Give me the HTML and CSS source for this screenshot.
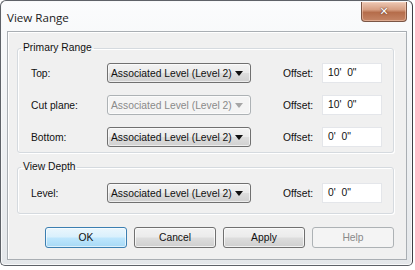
FILE: index.html
```html
<!DOCTYPE html>
<html>
<head>
<meta charset="utf-8">
<link rel="stylesheet" href="styles.css">
</head>
<body>
<div class="window">
  <div class="titlebar">
    <span class="title">View Range</span>
    <div class="close"><span class="close-x">&#x2715;</span></div>
  </div>
  <div class="client">
    <fieldset class="group g1">
      <legend>Primary Range</legend>
      <div class="row">
        <span class="label">Top:</span>
        <div class="combo"><span class="combo-text">Associated Level (Level 2)</span><svg class="arrow" width="8" height="5" viewBox="0 0 8 5"><path d="M0 0H8L4 5Z"/></svg></div>
        <span class="off-label">Offset:</span>
        <div class="field">10'  0"</div>
      </div>
      <div class="row">
        <span class="label">Cut plane:</span>
        <div class="combo disabled"><span class="combo-text">Associated Level (Level 2)</span><svg class="arrow" width="8" height="5" viewBox="0 0 8 5"><path d="M0 0H8L4 5Z"/></svg></div>
        <span class="off-label">Offset:</span>
        <div class="field">10'  0"</div>
      </div>
      <div class="row">
        <span class="label">Bottom:</span>
        <div class="combo"><span class="combo-text">Associated Level (Level 2)</span><svg class="arrow" width="8" height="5" viewBox="0 0 8 5"><path d="M0 0H8L4 5Z"/></svg></div>
        <span class="off-label">Offset:</span>
        <div class="field">0'  0"</div>
      </div>
    </fieldset>
    <fieldset class="group g2">
      <legend>View Depth</legend>
      <div class="row">
        <span class="label">Level:</span>
        <div class="combo"><span class="combo-text">Associated Level (Level 2)</span><svg class="arrow" width="8" height="5" viewBox="0 0 8 5"><path d="M0 0H8L4 5Z"/></svg></div>
        <span class="off-label">Offset:</span>
        <div class="field">0'  0"</div>
      </div>
    </fieldset>
    <div class="buttons">
      <div class="btn default">OK</div>
      <div class="btn">Cancel</div>
      <div class="btn">Apply</div>
      <div class="btn disabled">Help</div>
    </div>
  </div>
</div>
</body>
</html>
```
FILE: styles.css
```css
html, body {
  margin: 0;
  padding: 0;
  background: #ffffff;
}
body {
  font-family: "Liberation Sans", Arial, sans-serif;
  font-size: 10.3px;
  color: #111;
}
.window {
  box-sizing: border-box;
  width: 413px;
  height: 266px;
  border: 1px solid #5e6268;
  border-right-color: #3e4146;
  border-radius: 6px 6px 5px 5px;
  background: linear-gradient(180deg, #fbfcfd 0%, #f1f3f5 40%, #e4e7ea 100%);
  display: flex;
  flex-direction: column;
  box-shadow: inset 0 0 0 1px #f8f9fa;
}
.titlebar {
  height: 30px;
  display: flex;
  justify-content: space-between;
  align-items: flex-start;
}
.title {
  font-family: "Open Sans", "Liberation Sans", sans-serif;
  font-size: 11.6px;
  line-height: 14px;
  color: #1c1c1c;
  margin: 10px 0 0 6px;
}
.close {
  box-sizing: border-box;
  width: 46px;
  height: 20px;
  margin: 1px 5px 0 0;
  border: 1px solid #7a5545;
  border-top: none;
  border-radius: 0 0 4px 4px;
  background: linear-gradient(180deg, #ecc7b3 0%, #d79f83 40%, #b56d4b 55%, #c58566 100%);
  box-shadow: inset 0 0 0 1px rgba(255, 220, 200, 0.45);
  display: flex;
  align-items: center;
  justify-content: center;
}
.close-x {
  font-family: "DejaVu Sans", sans-serif;
  font-weight: bold;
  font-size: 11px;
  line-height: 11px;
  color: #ffffff;
  text-shadow: 0 0 2px #6a3a2a, 0 0 1px #6a3a2a;
}
.client {
  box-sizing: border-box;
  height: 229px;
  margin: 0 5px 0 6px;
  border: 1px solid #a9aeb3;
  background: #f0f0f0;
  box-shadow: inset 1px 1px 0 #ffffff;
  padding: 10px 12px 0 9px;
  display: flex;
  flex-direction: column;
}
.group {
  margin: 0;
  border: 1px solid #d5dadf;
  border-radius: 3px;
  box-shadow: inset 1px 1px 0 #ffffff, 1px 1px 0 #ffffff;
  display: flex;
  flex-direction: column;
  gap: 12px;
  min-width: 0;
}
.g1 {
  padding: 9px 11px 5px 13px;
}
.g2 {
  margin-top: 8px;
  padding: 10px 11px 10px 13px;
}
legend {
  line-height: 12px;
  padding: 0 2px;
  margin-left: -10px;
  color: #111;
}
.row {
  display: flex;
  align-items: center;
  height: 20px;
}
.label {
  width: 76px;
  flex: none;
}
.combo {
  box-sizing: border-box;
  width: 144px;
  height: 20px;
  flex: none;
  border: 1px solid #707070;
  border-radius: 3px;
  background: linear-gradient(180deg, #f3f3f3 0%, #ebebeb 48%, #dddddd 52%, #d0d0d0 100%);
  box-shadow: inset 0 0 0 1px rgba(255, 255, 255, 0.6);
  display: flex;
  align-items: center;
  justify-content: space-between;
  padding: 0 7px 0 3px;
}
.combo-text {
  white-space: nowrap;
}
.arrow {
  display: block;
  fill: #111;
}
.combo.disabled {
  border-color: #adb2b5;
  background: #f4f4f4;
  color: #8a8a8a;
}
.combo.disabled .arrow {
  fill: #a6a6a6;
}
.off-label {
  width: 39px;
  margin-left: 32px;
  flex: none;
}
.field {
  box-sizing: border-box;
  width: 60px;
  height: 20px;
  flex: none;
  background: #ffffff;
  border: 1px solid #e4e6ea;
  padding: 0 5px;
  line-height: 18px;
  white-space: pre;
}
.buttons {
  display: flex;
  gap: 7px;
  margin: 13px 0 0 28px;
}
.btn {
  box-sizing: border-box;
  width: 82px;
  height: 21px;
  border: 1px solid #707070;
  border-radius: 3px;
  background: linear-gradient(180deg, #f2f2f2 0%, #ebebeb 48%, #dddddd 52%, #cfcfcf 100%);
  box-shadow: inset 0 0 0 1px rgba(255, 255, 255, 0.7);
  display: flex;
  align-items: center;
  justify-content: center;
}
.btn.default {
  border-color: #3c7fb1;
  background: linear-gradient(180deg, #eaf6fd 0%, #d9f0fc 48%, #bee6fd 52%, #a7d9f5 100%);
  box-shadow: inset 0 0 0 1px rgba(255, 255, 255, 0.6);
}
.btn.disabled {
  border-color: #adb2b5;
  background: #f4f4f4;
  color: #8a8a8a;
  box-shadow: none;
}
```
